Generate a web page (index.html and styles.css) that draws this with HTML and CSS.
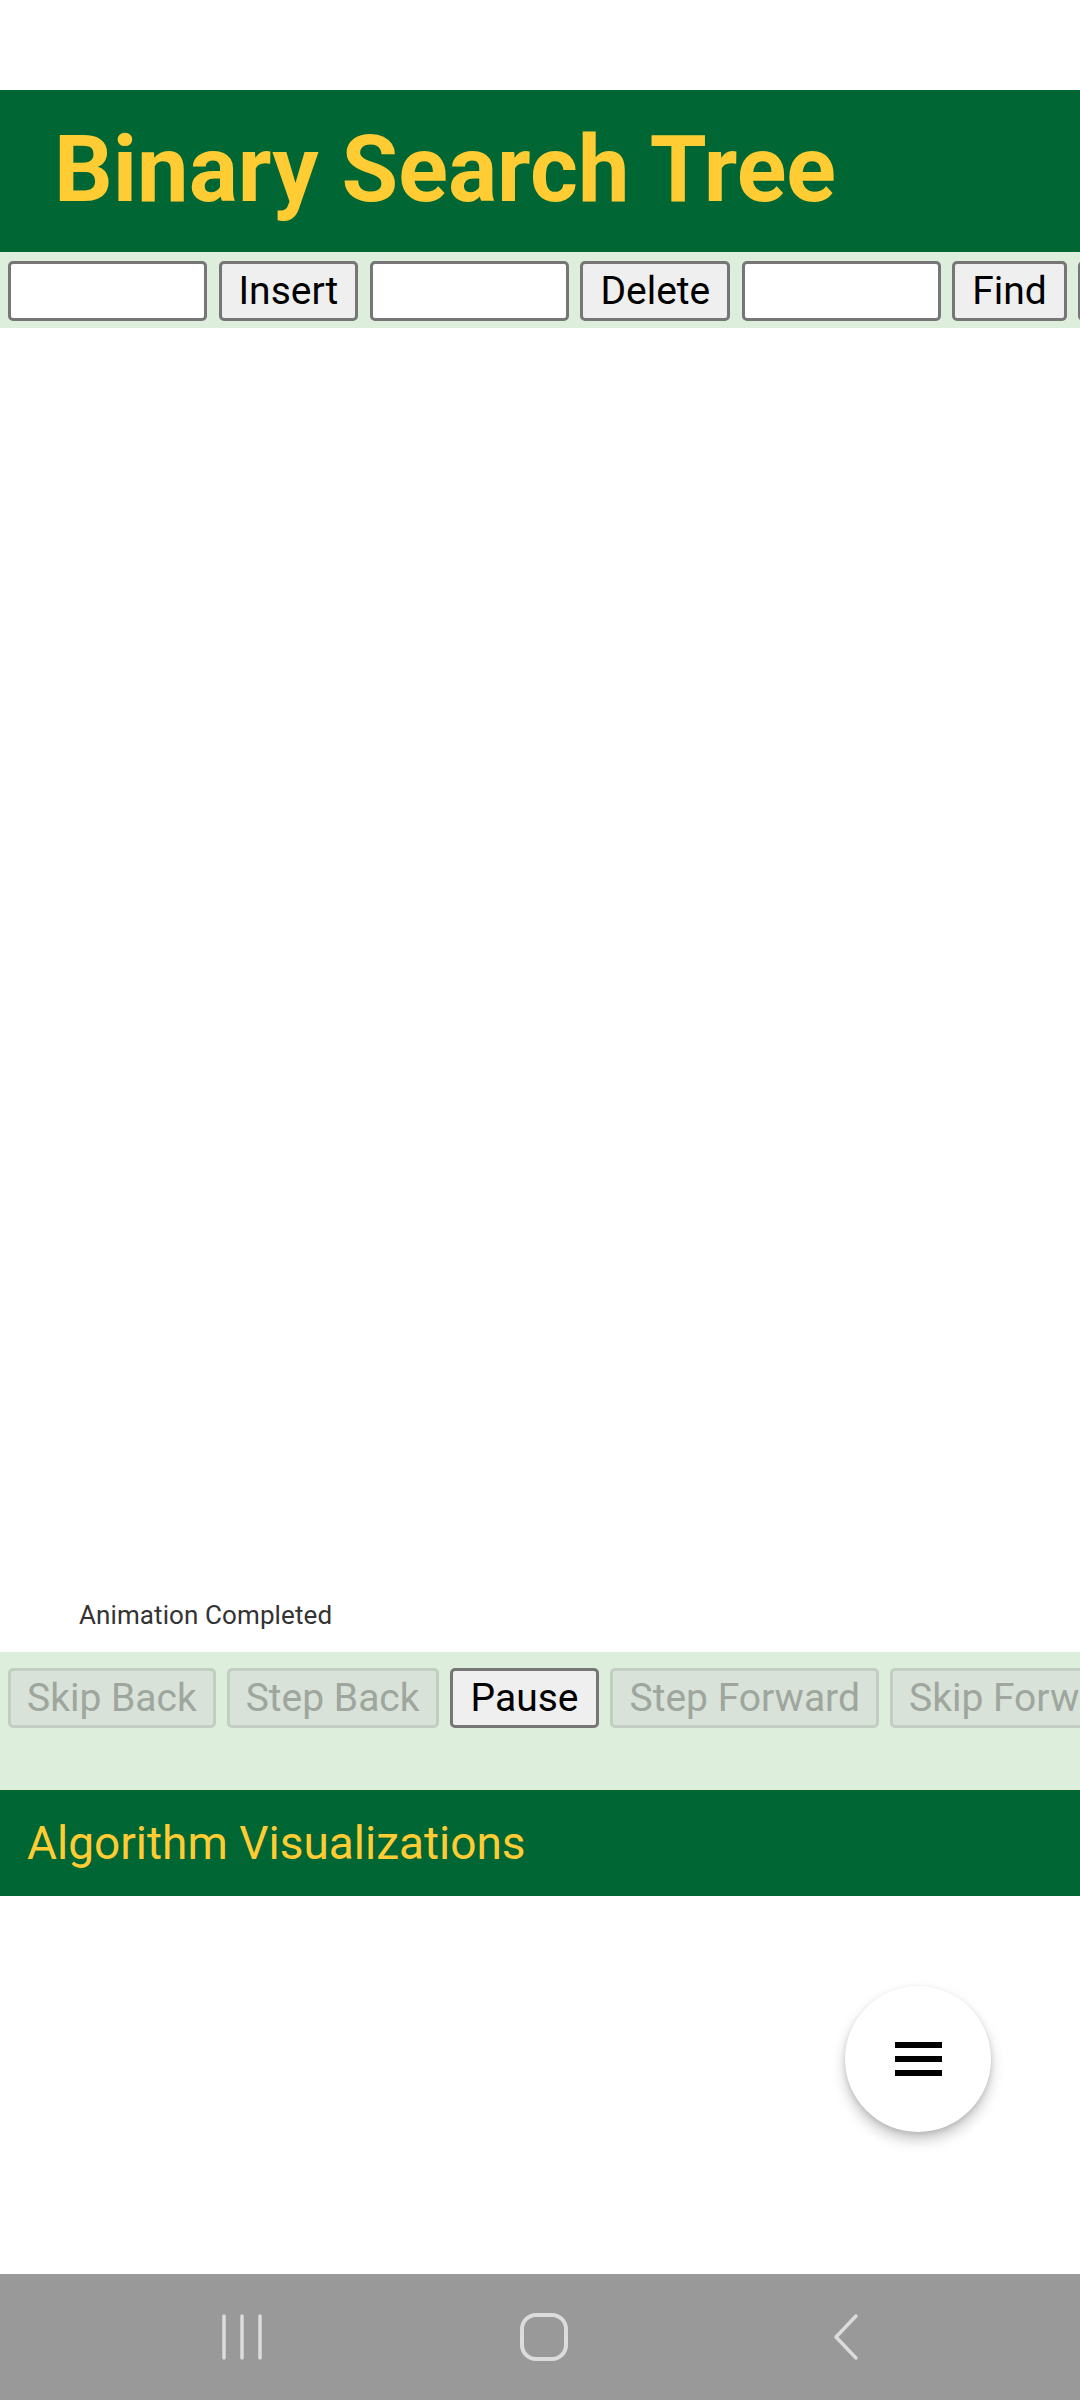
FILE: index.html
```html
<!DOCTYPE html>
<html>
<head>
<meta charset="utf-8">
<link rel="stylesheet" href="styles.css">
</head>
<body>
<div class="page">
  <div class="statusbar"></div>
  <header class="header"><h1 class="title">Binary Search Tree</h1></header>
  <div class="toolbar">
    <input class="field" type="text">
    <button class="btn">Insert</button>
    <input class="field" type="text">
    <button class="btn">Delete</button>
    <input class="field" type="text">
    <button class="btn">Find</button>
    <button class="btn">Print</button>
  </div>
  <div class="canvas">
    <div class="status">Animation Completed</div>
  </div>
  <div class="controls">
    <button class="btn wide" disabled>Skip Back</button>
    <button class="btn wide" disabled>Step Back</button>
    <button class="btn pause">Pause</button>
    <button class="btn wide" disabled>Step Forward</button>
    <button class="btn wide" disabled>Skip Forward</button>
  </div>
  <footer class="footer">Algorithm Visualizations</footer>
  <div class="filler"></div>
  <nav class="navbar">
    <div class="navcell">
      <svg width="44" height="48" viewBox="0 0 44 48"><g stroke="#dcdcdc" stroke-width="3.5" stroke-linecap="round"><line x1="4" y1="3" x2="4" y2="45"/><line x1="22" y1="3" x2="22" y2="45"/><line x1="40" y1="3" x2="40" y2="45"/></g></svg>
    </div>
    <div class="navcell">
      <svg width="52" height="50" viewBox="0 0 52 50"><rect x="4" y="3" width="44" height="44" rx="14" fill="none" stroke="#dcdcdc" stroke-width="4"/></svg>
    </div>
    <div class="navcell">
      <svg width="28" height="48" viewBox="0 0 28 48"><polyline points="24,3 4,24 24,45" fill="none" stroke="#dcdcdc" stroke-width="3.5" stroke-linecap="round" stroke-linejoin="round"/></svg>
    </div>
  </nav>
  <button class="fab" aria-label="menu">
    <span class="bar"></span><span class="bar"></span><span class="bar"></span>
  </button>
</div>
</body>
</html>
```
FILE: styles.css
```css
html, body {
  margin: 0;
  padding: 0;
  background: #ffffff;
}
body {
  width: 1080px;
  height: 2400px;
  overflow: hidden;
  font-family: Roboto, "Noto Sans", sans-serif;
}
.page {
  position: relative;
  width: 1080px;
  height: 2400px;
  display: flex;
  flex-direction: column;
}
.statusbar {
  height: 90px;
  flex: none;
}
.header {
  flex: none;
  height: 162px;
  background: #006633;
  display: flex;
  align-items: center;
  padding-left: 54px;
  box-sizing: border-box;
}
.title {
  margin: 0;
  font-family: Roboto, sans-serif;
  font-weight: 700;
  font-size: 92px;
  line-height: 1;
  color: #ffcc33;
  position: relative;
  top: -1px;
}
.toolbar {
  flex: none;
  height: 76px;
  background: #ddeedd;
  display: flex;
  align-items: flex-start;
  gap: 11.5px;
  padding: 9px 0 0 8px;
  box-sizing: border-box;
  overflow: hidden;
  white-space: nowrap;
}
.field {
  flex: none;
  width: 199px;
  height: 60px;
  box-sizing: border-box;
  border: 3px solid #767676;
  border-radius: 5px;
  background: #ffffff;
  margin: 0;
  padding: 0 6px;
  font-family: Roboto, sans-serif;
  font-size: 39px;
}
.btn {
  flex: none;
  height: 60px;
  box-sizing: border-box;
  border: 3px solid #767676;
  border-radius: 5px;
  background: #efefef;
  color: #000000;
  margin: 0;
  padding: 0 17px;
  font-family: Roboto, sans-serif;
  font-size: 39px;
  line-height: 1;
}
.btn:disabled {
  background: #d8e2d8;
  border-color: #c3cec3;
  color: #9ea69e;
}
.btn.wide {
  padding: 0 16px;
}
.btn.pause {
  padding: 0 18px;
}
.canvas {
  flex: none;
  height: 1324px;
  display: flex;
  align-items: flex-end;
  padding: 0 0 22px 79px;
  box-sizing: border-box;
  background: #ffffff;
}
.status {
  font-family: Roboto, sans-serif;
  font-size: 26px;
  line-height: 30px;
  color: #333333;
  letter-spacing: 0.1px;
}
.controls {
  flex: none;
  height: 138px;
  background: #ddeedd;
  display: flex;
  align-items: flex-start;
  gap: 11px;
  padding: 16px 0 0 8px;
  box-sizing: border-box;
  overflow: hidden;
  white-space: nowrap;
}
.footer {
  flex: none;
  height: 106px;
  background: #006633;
  color: #ffcc33;
  font-family: Roboto, sans-serif;
  font-size: 46px;
  display: flex;
  align-items: center;
  padding-left: 27px;
  box-sizing: border-box;
}
.filler {
  flex: 1;
  background: #ffffff;
}
.navbar {
  flex: none;
  height: 126px;
  background: #999999;
  display: grid;
  grid-template-columns: 302px 302px 302px;
  padding-left: 91px;
  box-sizing: border-box;
  align-items: center;
}
.navcell {
  display: flex;
  justify-content: center;
  align-items: center;
}
.fab {
  position: absolute;
  left: 845px;
  top: 1986px;
  width: 146px;
  height: 146px;
  border-radius: 50%;
  border: none;
  background: #ffffff;
  box-shadow: 0 8px 14px rgba(0, 0, 0, 0.22), 0 2px 5px rgba(0, 0, 0, 0.12);
  display: flex;
  flex-direction: column;
  align-items: center;
  justify-content: center;
  gap: 8px;
  padding: 0;
}
.bar {
  display: block;
  width: 47px;
  height: 6px;
  background: #000000;
}
```
